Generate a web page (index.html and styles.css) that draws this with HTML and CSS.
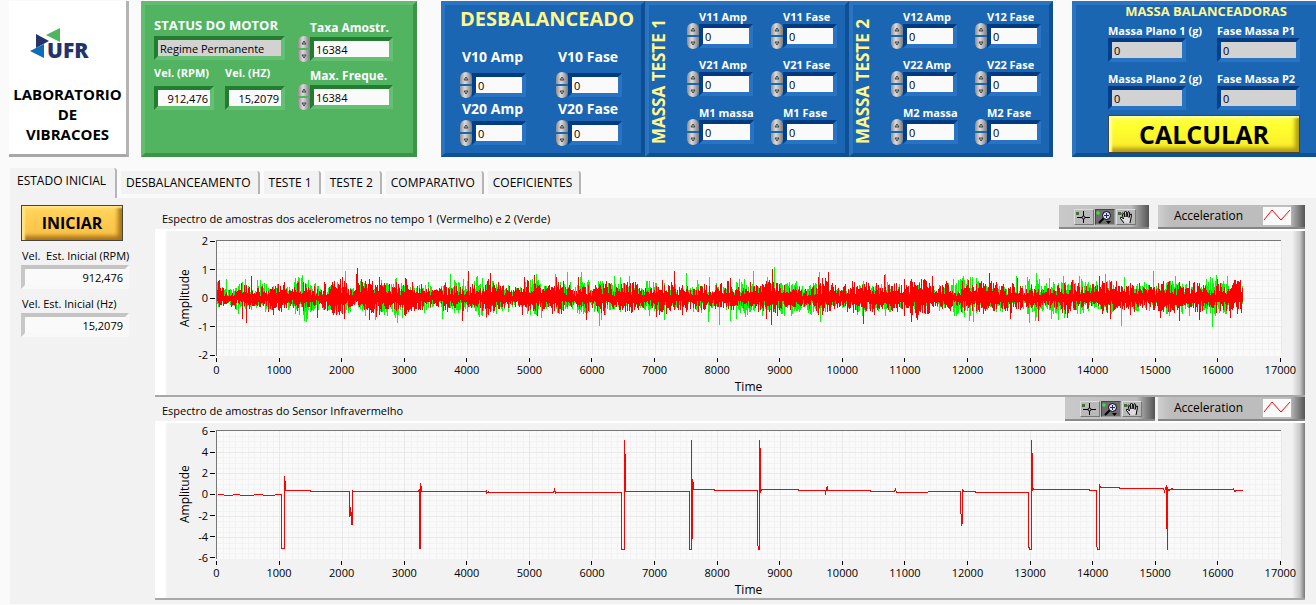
FILE: index.html
```html
<!DOCTYPE html>
<html lang="pt-br">
<head>
    <meta charset="UTF-8">
    <meta name="viewport" content="width=device-width, initial-scale=1.0">
    <title>Laboratorio de Vibracoes</title>
    <link rel="stylesheet" href="styles.css">
</head>
<body>
    <!-- Painel superior -->
    <header class="topo">
        <div class="marca">
            <svg class="logo" viewBox="0 0 84 40" role="img" aria-label="UFR">
                <path d="M7 7 L20 14 L7 21 Z" fill="#23346b"/>
                <path d="M31 1 L31 15 L17 8 Z" fill="#4fb561"/>
                <path d="M15 17 L15 31 L1 24 Z" fill="#0f6db8"/>
                <text x="18" y="31" class="logo-texto">UFR</text>
            </svg>
            <h1>LABORATORIO<br>DE<br>VIBRACOES</h1>
        </div>

        <!-- Status do motor -->
        <section class="painel verde">
            <div class="status">
                <label class="titulo-status" for="status">STATUS DO MOTOR</label>
                <input class="campo leitura" id="status" value="Regime Permanente" readonly>
                <div class="velocidades">
                    <div>
                        <label for="rpm">Vel. (RPM)</label>
                        <input class="campo direita" id="rpm" value="912,476" readonly>
                    </div>
                    <div>
                        <label for="hz">Vel. (HZ)</label>
                        <input class="campo direita" id="hz" value="15,2079" readonly>
                    </div>
                </div>
            </div>
            <div class="amostragem">
                <div class="controle"><label for="taxa">Taxa Amostr.</label><input class="campo" id="taxa" value="16384"></div>
                <div class="controle"><label for="freq">Max. Freque.</label><input class="campo" id="freq" value="16384"></div>
            </div>
        </section>

        <div class="massas">
            <!-- Desbalanceado -->
            <section class="painel azul desbalanceado">
                <h2>DESBALANCEADO</h2>
                <div class="controles">
                    <div class="controle"><label for="v10a">V10 Amp</label><input class="campo" id="v10a" value="0"></div>
                    <div class="controle"><label for="v10f">V10 Fase</label><input class="campo" id="v10f" value="0"></div>
                    <div class="controle"><label for="v20a">V20 Amp</label><input class="campo" id="v20a" value="0"></div>
                    <div class="controle"><label for="v20f">V20 Fase</label><input class="campo" id="v20f" value="0"></div>
                </div>
            </section>

            <!-- Massa teste 1 -->
            <section class="painel azul teste">
                <h2>MASSA TESTE 1</h2>
                <div class="controles">
                    <div class="controle"><label for="v11a">V11 Amp</label><input class="campo" id="v11a" value="0"></div>
                    <div class="controle"><label for="v11f">V11 Fase</label><input class="campo" id="v11f" value="0"></div>
                    <div class="controle"><label for="v21a">V21 Amp</label><input class="campo" id="v21a" value="0"></div>
                    <div class="controle"><label for="v21f">V21 Fase</label><input class="campo" id="v21f" value="0"></div>
                    <div class="controle"><label for="m1m">M1 massa</label><input class="campo" id="m1m" value="0"></div>
                    <div class="controle"><label for="m1f">M1 Fase</label><input class="campo" id="m1f" value="0"></div>
                </div>
            </section>

            <!-- Massa teste 2 -->
            <section class="painel azul teste">
                <h2>MASSA TESTE 2</h2>
                <div class="controles">
                    <div class="controle"><label for="v12a">V12 Amp</label><input class="campo" id="v12a" value="0"></div>
                    <div class="controle"><label for="v12f">V12 Fase</label><input class="campo" id="v12f" value="0"></div>
                    <div class="controle"><label for="v22a">V22 Amp</label><input class="campo" id="v22a" value="0"></div>
                    <div class="controle"><label for="v22f">V22 Fase</label><input class="campo" id="v22f" value="0"></div>
                    <div class="controle"><label for="m2m">M2 massa</label><input class="campo" id="m2m" value="0"></div>
                    <div class="controle"><label for="m2f">M2 Fase</label><input class="campo" id="m2f" value="0"></div>
                </div>
            </section>
        </div>

        <!-- Resultado do balanceamento -->
        <section class="painel azul balanceadoras">
            <h2>MASSA BALANCEADORAS</h2>
            <div class="resultados">
                <div><label for="mp1">Massa Plano 1 (g)</label><input class="campo leitura" id="mp1" value="0" readonly></div>
                <div><label for="fp1">Fase Massa P1</label><input class="campo leitura" id="fp1" value="0" readonly></div>
                <div><label for="mp2">Massa Plano 2 (g)</label><input class="campo leitura" id="mp2" value="0" readonly></div>
                <div><label for="fp2">Fase Massa P2</label><input class="campo leitura" id="fp2" value="0" readonly></div>
            </div>
            <button type="button" class="botao calcular">CALCULAR</button>
        </section>
    </header>

    <!-- Abas -->
    <nav class="abas">
        <button type="button" class="aba ativa">ESTADO INICIAL</button>
        <button type="button" class="aba">DESBALANCEAMENTO</button>
        <button type="button" class="aba">TESTE 1</button>
        <button type="button" class="aba">TESTE 2</button>
        <button type="button" class="aba">COMPARATIVO</button>
        <button type="button" class="aba">COEFICIENTES</button>
    </nav>

    <main class="pagina">
        <aside class="lateral">
            <button type="button" class="botao iniciar">INICIAR</button>
            <label for="rpm0">Vel.&nbsp; Est. Inicial (RPM)</label>
            <input class="campo claro direita" id="rpm0" value="912,476" readonly>
            <label for="hz0">Vel. Est. Inicial (Hz)</label>
            <input class="campo claro direita" id="hz0" value="15,2079" readonly>
        </aside>

        <div class="graficos">
            <!-- Acelerometros -->
            <section class="grafico">
                <div class="cabecalho">
                    <h3>Espectro de amostras dos acelerometros no tempo 1 (Vermelho) e 2 (Verde)</h3>
                    <div class="paleta"></div>
                    <div class="legenda">Acceleration
                        <svg viewBox="0 0 28 18"><path d="M1 13 L9 3 L18 13 L27 3"/></svg>
                    </div>
                </div>
                <div class="moldura">
                    <span class="eixo-y">Amplitude</span>
                    <div class="escala-y" data-min="-2" data-max="2" data-passo="1"></div>
                    <svg class="area" id="acelerometros" viewBox="0 0 1064 115" preserveAspectRatio="none"></svg>
                    <div class="escala-x"></div>
                    <span class="eixo-x">Time</span>
                </div>
            </section>

            <!-- Sensor infravermelho -->
            <section class="grafico infravermelho">
                <div class="cabecalho">
                    <h3>Espectro de amostras do Sensor Infravermelho</h3>
                    <div class="paleta"></div>
                    <div class="legenda">Acceleration
                        <svg viewBox="0 0 28 18"><path d="M1 13 L9 3 L18 13 L27 3"/></svg>
                    </div>
                </div>
                <div class="moldura">
                    <span class="eixo-y">Amplitude</span>
                    <div class="escala-y" data-min="-6" data-max="6" data-passo="2"></div>
                    <svg class="area" id="infravermelho" viewBox="0 0 1064 128" preserveAspectRatio="none"></svg>
                    <div class="escala-x"></div>
                    <span class="eixo-x">Time</span>
                </div>
            </section>
        </div>
    </main>

    <script src="script.js"></script>
</body>
</html>
```

FILE: styles.css
```css
/* Estilos gerais */
* {
    box-sizing: border-box;
}

body {
    margin: 0;
    background-color: #fafafa;
    color: #000;
    font-family: 'Open Sans', 'Noto Sans', sans-serif;
    font-size: 11px;
    line-height: 14px;
}

h1, h2, h3 {
    margin: 0;
}

input, button {
    font-family: inherit;
    font-size: inherit;
    color: inherit;
}

button {
    padding: 0;
    border: none;
    cursor: pointer;
}

label {
    display: block;
    white-space: nowrap;
}

/* Painel superior */
.topo {
    display: grid;
    grid-template-columns: 120fr 288fr 636fr 263fr;
    align-items: start;
    padding: 1px 0 0 9px;
}

.marca {
    height: 156px;
    padding-top: 26px;
    background-color: #fff;
    border: solid;
    border-width: 0 3px 3px 0;
    border-color: #fff #b4b4b4 #a8a8a8 #fff;
    text-align: center;
}

.marca h1 {
    margin-top: 17px;
    font-size: 15px;
    line-height: 20px;
}

.logo {
    display: block;
    width: 84px;
    height: 40px;
    margin-left: 20px;
    overflow: visible;
}

.logo-texto {
    font-size: 21px;
    font-weight: 800;
    fill: #23346b;
}

.painel {
    height: 156px;
    border: 4px solid;
    color: #fff;
    font-weight: bold;
}

.verde {
    display: flex;
    gap: 13px;
    margin-left: 12px;
    padding: 9px;
    background-color: #52b361;
    border-color: #62bd70 #3b9549 #3b9549 #62bd70;
}

.azul {
    background-color: #1b66b3;
    border-color: #2a74c2 #0f4f93 #0f4f93 #2a74c2;
}

/* Campos */
.campo {
    display: block;
    width: 100%;
    height: 24px;
    padding: 0 2px;
    background-color: #fafafa;
    border: 4px solid;
    border-color: #003a80 #2873c4 #2873c4 #003f8c;
    border-radius: 0;
    outline: none;
    color: #000;
    font-weight: normal;
}

.verde .campo {
    border-color: #237d31 #63c072 #63c072 #237d31;
}

.campo.leitura {
    background-color: #d2d2d2;
}

.campo.direita {
    text-align: right;
}

.controle {
    display: grid;
    grid-template-columns: 12px 1fr;
}

.controle label {
    grid-column: 2;
}

/* Botoes de incremento */
.incremento {
    display: flex;
    flex-direction: column;
    gap: 2px;
    grid-column: 1;
    height: 26px;
    margin: -1px 0;
}

.incremento button {
    display: flex;
    align-items: center;
    justify-content: center;
    flex: 1;
    background: linear-gradient(90deg, #8c8c8c, #dcdcdc 40%, #7c7c7c);
}

.incremento button:first-child {
    border-radius: 6px 6px 0 0;
}

.incremento button:last-child {
    border-radius: 0 0 6px 6px;
}

.incremento svg {
    width: 6px;
    height: 5px;
    fill: #b8b8b8;
    stroke: #444;
}

/* Status do motor */
.status {
    width: 131px;
}

.titulo-status {
    font-size: 13px;
    line-height: 22px;
}

.velocidades {
    display: grid;
    grid-template-columns: 60px 60px;
    gap: 11px;
}

.velocidades label {
    line-height: 26px;
}

.amostragem {
    display: grid;
    align-content: start;
    gap: 6px;
    width: 95px;
    padding-top: 5px;
}

.amostragem label {
    font-size: 12px;
    line-height: 18px;
}

/* Paineis de massas */
.massas {
    display: grid;
    grid-template-columns: repeat(3, 1fr);
    margin-left: 24px;
}

.massas h2, .balanceadoras h2 {
    color: #fff68c;
}

.controles {
    display: grid;
}

.desbalanceado {
    padding: 0 0 0 15px;
}

.desbalanceado h2 {
    font-size: 20px;
    line-height: 28px;
}

.desbalanceado .controles {
    grid-template-columns: 66px 66px;
    column-gap: 30px;
    margin-top: 12px;
}

.desbalanceado label {
    margin-left: -10px;
    font-size: 14px;
    line-height: 24px;
}

.desbalanceado .controle:nth-child(-n+2) label {
    margin-bottom: 4px;
}

.teste {
    display: flex;
    gap: 18px;
    padding-top: 5px;
}

.teste h2 {
    width: 20px;
    writing-mode: vertical-rl;
    transform: rotate(180deg);
    font-size: 17px;
    line-height: 20px;
    text-align: center;
    white-space: nowrap;
}

.teste .controles {
    grid-template-columns: 66px 66px;
    grid-auto-rows: 38px;
    gap: 10px 18px;
}

/* Massas balanceadoras */
.balanceadoras {
    margin-left: 19px;
    padding: 0 12px 0 32px;
    border-right: none;
}

.balanceadoras h2 {
    font-size: 13px;
    line-height: 12px;
    text-align: center;
}

.resultados {
    display: grid;
    grid-template-columns: 78px 83px;
    grid-auto-rows: 38px;
    row-gap: 10px;
    justify-content: space-between;
    margin: 7px 4px 5px 0;
}

.botao {
    display: block;
    border: 1px solid #444;
    color: #000;
    font-weight: bold;
}

.calcular {
    width: calc(100% - 4px);
    height: 38px;
    background: linear-gradient(#ffff50, #ffff2e 30%, #f8e92c);
    box-shadow: inset 3px 2px 2px #ffff9a, inset -4px -4px 4px #b19c10;
    font-size: 25px;
    line-height: 36px;
}

/* Abas */
.abas {
    display: flex;
    gap: 4px;
    height: 30px;
    margin-top: 11px;
    padding-left: 10px;
    font-size: 12px;
}

.aba {
    height: 23px;
    margin-top: 3px;
    padding: 0 7px 0 5px;
    background-color: #f2f2f2;
    border-right: 2px solid #b5b5b5;
    border-radius: 0 3px 0 0;
}

.aba.ativa {
    height: 30px;
    margin-top: 0;
    padding: 0 9px 6px 7px;
}

/* Conteudo da aba */
.pagina {
    display: flex;
    margin-left: 10px;
    padding: 7px 11px 4px;
    background-color: #f2f2f2;
}

.lateral {
    width: 108px;
    margin-right: 26px;
    flex-shrink: 0;
}

.lateral label {
    margin-top: 6px;
    padding-left: 1px;
    line-height: 18px;
}

.iniciar {
    width: 102px;
    height: 36px;
    background: linear-gradient(#ffd95e, #ffcb50 40%, #f9bf45);
    box-shadow: inset 3px 2px 2px #ffe48a, inset -4px -4px 4px #a87414;
    font-size: 16px;
}

.campo.claro {
    border-color: #c4c4c4 #f8f8f8 #f8f8f8 #c8c8c8;
}

.graficos {
    flex: 1;
    min-width: 0;
}

.cabecalho {
    display: flex;
    align-items: flex-start;
    gap: 9px;
    height: 24px;
}

.cabecalho h3 {
    flex: 1;
    padding: 7px 0 0 7px;
    font-size: 11px;
    font-weight: normal;
    white-space: nowrap;
}

/* Paleta de ferramentas do grafico */
.paleta {
    display: flex;
    gap: 1px;
    width: 90px;
    height: 24px;
    padding: 4px 0 0 15px;
    background: linear-gradient(90deg, #c9c9c9, #bcbcbc 80%, #555);
    border-bottom: 2px solid #8a8a8a;
}

.infravermelho .cabecalho {
    gap: 3px;
}

.paleta button {
    width: 20px;
    height: 16px;
    background-color: #b9b9b9;
    border: 1px solid;
    border-color: #ddd #777 #777 #ddd;
}

.paleta button.ligada {
    background-color: #6d6d6d;
    border-color: #444 #999 #999 #444;
}

.paleta svg {
    display: block;
    width: 18px;
    height: 14px;
}

.legenda {
    display: flex;
    justify-content: space-between;
    width: 147px;
    height: 24px;
    padding: 2px 14px 0 16px;
    background: linear-gradient(90deg, #cfcfcf, #bdbdbd 12px, #bdbdbd 132px, #555);
    border-bottom: 2px solid #858585;
    font-size: 12px;
    line-height: 18px;
}

.legenda svg {
    width: 28px;
    height: 18px;
    background-color: #fafafa;
    fill: none;
    stroke: #f00;
}

/* Area do grafico */
.moldura {
    display: grid;
    grid-template-columns: 30px 16px 1fr;
    padding: 9px 24px 0 15px;
    background: linear-gradient(90deg, #fff 10px, #f2f2f2 12px, #f2f2f2 calc(100% - 13px), #c8c8c8 calc(100% - 5px), #777);
    border-top: 2px solid #fff;
    border-bottom: 2px solid #a8a8a8;
}

.infravermelho .moldura {
    padding-top: 7px;
}

.eixo-y {
    writing-mode: vertical-rl;
    transform: rotate(180deg);
    line-height: 30px;
    font-size: 12px;
    text-align: center;
}

.area {
    display: block;
    width: 100%;
    height: 116px;
    background-color: #fafafa;
    border: solid #777;
    border-width: 1px 0 0 1px;
    overflow: visible;
}

.infravermelho .area {
    height: 129px;
}

.escala-y {
    display: flex;
    flex-direction: column;
    justify-content: space-between;
    padding: 1px 1px 1px 0;
}

.escala-y span {
    display: flex;
    align-items: center;
    justify-content: flex-end;
    gap: 2px;
    height: 0;
}

.escala-y span::after {
    content: "";
    width: 5px;
    height: 1px;
    flex-shrink: 0;
    background-color: #000;
}

.escala-x {
    display: flex;
    grid-column: 3;
    justify-content: space-between;
    height: 22px;
    padding-top: 2px;
}

.escala-x span {
    display: flex;
    flex-direction: column;
    align-items: center;
    width: 1px;
}

.escala-x span::before {
    content: "";
    width: 1px;
    height: 4px;
    margin-bottom: 1px;
    background-color: #000;
}

.eixo-x {
    grid-column: 3;
    height: 17px;
    font-size: 12px;
    line-height: 18px;
    text-align: center;
}

.area path {
    fill: none;
    stroke-width: 1;
    shape-rendering: crispEdges;
}

.area .grade-fina {
    stroke: #f2f2f2;
}

.area .grade {
    stroke: #e9e9e9;
}

.area .verde-2 {
    stroke: #0f0;
}

.area .vermelho-1 {
    stroke: #f00;
}
```

FILE: script.js
```js
// Largura ocupada por 1000 amostras na area do grafico
var PASSO_X = 1064 / 17;

// Botoes de incremento ao lado de cada controle numerico
document.querySelectorAll('.controle').forEach(function (controle) {
    var campo = controle.querySelector('input');
    var caixa = document.createElement('span');
    caixa.className = 'incremento';
    caixa.innerHTML =
        '<button type="button" aria-label="Aumentar"><svg viewBox="0 0 6 5"><path d="M3 1 L5 4 H1 Z"/></svg></button>' +
        '<button type="button" aria-label="Diminuir"><svg viewBox="0 0 6 5"><path d="M1 1 H5 L3 4 Z"/></svg></button>';
    var botoes = caixa.querySelectorAll('button');
    botoes[0].onclick = function () { campo.value = Number(campo.value) + 1; };
    botoes[1].onclick = function () { campo.value = Number(campo.value) - 1; };
    controle.insertBefore(caixa, campo);
});

// Ferramentas: cursor, zoom e mao
document.querySelectorAll('.paleta').forEach(function (paleta) {
    paleta.innerHTML =
        '<button type="button" aria-label="Cursor"><svg viewBox="0 0 18 14"><path d="M1 2h3v3H1z" fill="#4b6b3c"/>' +
        '<path d="M8.5 1v12M2 7.5h13" stroke="#000" fill="none"/><circle cx="8.5" cy="7.5" r="1.5" fill="#b9b9b9" stroke="#000"/></svg></button>' +
        '<button type="button" class="ligada" aria-label="Zoom"><svg viewBox="0 0 18 14"><path d="M2 1v4M0 3h4" stroke="#3f3"/>' +
        '<circle cx="10.5" cy="5.5" r="4" fill="#dde" stroke="#000"/><path d="M8 5.500h5M10.500 3v5" stroke="#228"/>' +
        '<path d="M7.500 8.500L3 13" stroke="#000" stroke-width="2"/><path d="M10 11h5l-2.500 3z"/></svg></button>' +
        '<button type="button" aria-label="Mover"><svg viewBox="0 0 18 14"><path d="M1 2h3v3H1z" fill="#4b6b3c"/>' +
        '<path d="M7 13L3.500 8.500Q3 6.500 5 7.500L6.500 9L5 3.500Q5.500 2 6.500 3.500L8 7L7.500 2Q8.500 0 9.500 2L10 7L11 2Q12 1 12.500 2.500L12 7.500L13.500 4Q15 3.500 14.500 5.500L13 13" fill="#ddd" stroke="#000"/></svg></button>';
});

// Escalas dos eixos
document.querySelectorAll('.escala-y').forEach(function (escala) {
    var d = escala.dataset;
    for (var v = Number(d.max); v >= Number(d.min); v -= Number(d.passo)) {
        escala.innerHTML += '<span>' + v + '</span>';
    }
});

document.querySelectorAll('.escala-x').forEach(function (escala) {
    for (var v = 0; v <= 17000; v += 1000) {
        escala.innerHTML += '<span>' + v + '</span>';
    }
});

function desenhar(svg, classe, caminho) {
    svg.innerHTML += '<path class="' + classe + '" d="' + caminho + '"/>';
}

// Grade do grafico
function desenharGrade(svg, altura, divisoes, finas) {
    var fina = '', grossa = '';
    for (var i = 1; i <= 170; i++) {
        var linha = 'M' + (i * PASSO_X / 10) + ' 0V' + altura;
        if (i % 10 === 0) grossa += linha; else fina += linha;
    }
    for (var j = 1; j < divisoes * finas; j++) {
        var y = 'M0 ' + (j * altura / (divisoes * finas)) + 'H1064';
        if (j % finas === 0) grossa += y; else fina += y;
    }
    desenhar(svg, 'grade-fina', fina);
    desenhar(svg, 'grade', grossa);
}

// Gerador com semente fixa, o sinal e sempre o mesmo
function gerador(semente) {
    return function () {
        semente = (semente * 16807) % 2147483647;
        return semente / 2147483647;
    };
}

// Ruido de fundo mais os picos [x, altura]
function sinal(semente, base, picos) {
    var rand = gerador(semente), caminho = '', extras = {};
    var antes = 1, depois = 1;
    picos.forEach(function (p) { extras[p[0]] = p[1]; });
    for (var x = 0; x <= 1025; x++) {
        // A amplitude muda a cada poucas colunas, formando rajadas
        if (x % 9 === 0) {
            antes = depois;
            depois = 0.6 + 0.9 * rand();
        }
        var nivel = base * (antes + (depois - antes) * (x % 9) / 9);
        var cima = nivel * (0.15 + 0.7 * rand() + 0.4 * Math.pow(rand(), 6));
        var baixo = nivel * (0.15 + 0.6 * rand() + 0.4 * Math.pow(rand(), 6));
        if (extras[x] > 0) cima = extras[x];
        if (extras[x] < 0) baixo = -extras[x];
        caminho += 'M' + (x + 0.5) + ' ' + Math.round(57 - cima) + 'V' + Math.round(57 + baixo);
    }
    return caminho;
}

var acel = document.getElementById('acelerometros');
desenharGrade(acel, 114, 4, 5);
desenhar(acel, 'verde-2', sinal(4211, 17, [
    [9, 19], [128, 27], [185, -20], [225, -21], [233, 24], [338, 24], [350, 26], [364, 26], [382, -28],
    [403, 21], [412, 22], [447, -22], [469, 25], [491, -24], [492, 21], [502, -27], [513, -23], [536, 27],
    [557, 31], [602, 26], [603, -24], [668, 24], [752, -23], [799, 22], [818, -23], [819, 25], [904, -28],
    [907, 21], [936, 27], [993, 21], [995, -29]
]));
desenhar(acel, 'vermelho-1', sinal(977, 16, [
    [2, 18], [25, -21], [29, -25], [34, 22], [100, -20], [125, 21], [139, 24], [140, 30], [245, -23],
    [251, 27], [317, 23], [339, 21], [361, 21], [369, -22], [457, 27], [513, 20], [554, -27], [555, 29],
    [611, 26], [646, -26], [667, 23], [715, 22], [751, 18], [821, -23], [850, -20], [962, -23], [972, 17]
]));

// Sensor infravermelho, pontos [x, y] ja na escala do grafico
var pontos = [
    [0, 64], [6, 64], [7, 65], [15, 65], [16, 64], [22, 64], [23, 65], [36, 65], [37, 64], [53, 65], [62, 64],
    [64, 64], [64, 118], [67, 118], [67, 46], [68, 55], [68, 60], [93, 60], [93, 61],
    [132, 61], [132, 86], [133, 77], [134, 94], [134, 82], [135, 94], [135, 59], [135, 61],
    [201, 61], [202, 59], [202, 118], [203, 118], [203, 53], [204, 58], [204, 61],
    [268, 61], [269, 60], [269, 63], [271, 61], [271, 62], [336, 62], [337, 59], [338, 63], [339, 62],
    [404, 62], [404, 119], [407, 119], [407, 10], [408, 36], [408, 61],
    [472, 61], [472, 119], [474, 119], [474, 10], [475, 108], [475, 49], [476, 55], [476, 59], [497, 59], [497, 60],
    [540, 60], [540, 111], [541, 119], [542, 119], [542, 10], [543, 24], [543, 62], [544, 59], [581, 59], [581, 60],
    [608, 60], [608, 64], [609, 58], [610, 56], [610, 60], [653, 60], [653, 61], [677, 61], [678, 59], [679, 62],
    [743, 61], [743, 72], [744, 95], [745, 91], [745, 59], [746, 61], [758, 61], [758, 62],
    [811, 62], [811, 115], [812, 119], [814, 119], [814, 10], [815, 34], [815, 60], [816, 58], [817, 59],
    [872, 59], [872, 60], [879, 60], [879, 113], [880, 119], [882, 119], [882, 54], [883, 57], [902, 57], [902, 58],
    [946, 58], [947, 61], [949, 55], [949, 98], [950, 98], [950, 119], [950, 57], [951, 60], [955, 58], [955, 59],
    [1015, 59], [1016, 58], [1017, 61], [1019, 60], [1025, 60]
];
var infra = document.getElementById('infravermelho');
desenharGrade(infra, 128, 6, 4);
desenhar(infra, 'vermelho-1', 'M' + pontos.map(function (p) {
    return (p[0] + 0.5) + ' ' + (p[1] - 0.5);
}).join('L'));
```
